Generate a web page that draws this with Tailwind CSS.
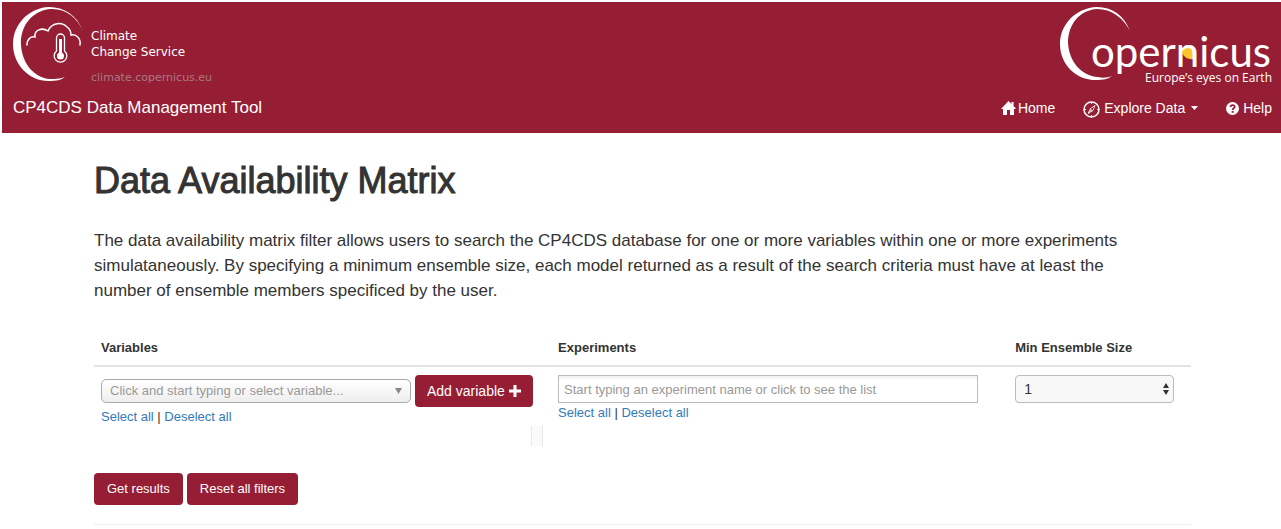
<!DOCTYPE html>
<html lang="en">
<head>
<meta charset="utf-8">
<meta name="viewport" content="width=device-width, initial-scale=1">
<title>Data Availability Matrix</title>
<script src="https://cdn.jsdelivr.net/npm/@tailwindcss/browser@4"></script>
</head>
<body class="bg-white font-['Liberation_Sans',Arial,sans-serif] text-[13px] leading-[18px] text-[#333]">
<header class="ml-0.5 mt-0.5 flex flex-col bg-[#961e34] pb-[13px] pl-[11px] pr-[9px] text-white">
  <div class="flex items-start justify-between">
    <a href="#" aria-label="Climate Change Service" class="flex items-start">
      <svg class="mt-1 h-[78px] w-[78px] shrink-0" viewBox="13 6 78 78" fill="none" aria-hidden="true">
        <path d="M83 31C77 15 64 7 49 7C28 8 13 25 13 44C13 66 31 82 50 81C56 81 61 80 65 77C59 79 55 79 50 79C34 78 22 63 21 45C20 26 32 11 50 9C65 8 77 17 83 31Z" fill="#fff"/>
        <path d="M27 45C27 39 31 36 35 37C34 30 42 27 48 31C52 22 62 22 67 27C70 29 71 32 71 35C77 34 81 39 80 45" stroke="#fff" stroke-width="1.500" stroke-linecap="round"/>
        <path d="M56.500 51V38a4 4 0 0 1 8 0V51a6.300 6.300 0 1 1-8 0Z" stroke="#fff" stroke-width="1.300"/>
        <path d="M60.500 39V56" stroke="#fff" stroke-width="3"/><circle cx="60.500" cy="56" r="3.500" fill="#fff"/>
      </svg>
      <span class="mt-[26px] flex flex-col font-['DejaVu_Sans',sans-serif] text-[12px] leading-4">
        <span>Climate</span><span>Change Service</span>
        <span class="mt-2.5 text-[11px] text-[#a87a82]">climate.copernicus.eu</span>
      </span>
    </a>
    <a href="#" aria-label="Copernicus" class="mt-1">
      <svg class="h-[80px] w-[214px] overflow-visible" viewBox="1058 6 214 80">
        <path d="M1130 31C1124 15 1112 7 1097 7C1075 8 1060 25 1060 44C1060 66 1078 81 1097 80C1103 80 1108 79 1112 76C1107 78 1102 78 1098 77C1081 76 1069 61 1068 43C1068 24 1080 10 1097 9C1112 9 1123 18 1130 31Z" fill="#fff"/>
        <path d="M1182 50C1184 44 1192 44 1194 49V59C1187 60 1182 56 1182 50Z" fill="#ffc72c"/>
        <text x="1091" y="67" font-family="Lato, sans-serif" font-size="42" fill="#fff">opernicus</text>
        <text x="1272" y="82" text-anchor="end" font-family="Open Sans, sans-serif" font-size="12" fill="#fff">Europe’s eyes on Earth</text>
      </svg>
    </a>
  </div>
  <nav class="mt-2.5 flex items-center justify-between">
    <a href="#" class="text-[17px] leading-6 [-webkit-text-stroke:0px]">CP4CDS Data Management Tool</a>
    <div class="flex items-center text-[14px]">
      <a href="#" class="flex items-center gap-0.5">
        <svg class="h-[14px] w-[15px]" viewBox="0 0 15 14" fill="#fff"><path d="M7.500 0L10.500 3V1h2v4l2.500 2.500L14 8h-1v6H9V9H6v5H2V8H0Z"/></svg>Home</a>
      <button type="button" class="ml-7 flex items-center gap-1">
        <svg class="mt-0.5 h-[17px] w-[17px]" viewBox="0 0 17 17" fill="none" stroke="#fff"><circle cx="8.500" cy="8.500" r="7.500" stroke-width="1.500"/><path d="M8.500 1v2M8.500 14v2M1 8.500h2M14 8.500h2"/><path d="M12 4.500L10 9.500L5 12.500L7.500 7.500Z" stroke-width=".8"/><path d="M7.500 7.500L10 9.500L5 12.500Z" fill="#fff" stroke="none" opacity=".6"/></svg>Explore Data
        <svg class="ml-0.5 h-1 w-[7px]" viewBox="0 0 7 4"><path d="M0 0h7L3.500 4Z" fill="#fff"/></svg></button>
      <a href="#" class="ml-7 flex items-center gap-1">
        <svg class="h-[13px] w-[13px]" viewBox="0 0 13 13"><circle cx="6.500" cy="6.500" r="6.500" fill="#fff"/><path d="M4.500 5C4.500 2.500 8.700 2.500 8.700 4.800C8.700 6.300 6.600 6.200 6.600 8" fill="none" stroke="#961e34" stroke-width="1.800"/><path d="M5.700 9h1.900v1.800H5.700Z" fill="#961e34"/></svg>Help</a>
    </div>
  </nav>
</header>
<main class="pl-[94px] pr-[90px]">
  <h1 class="mt-7 text-[36px] leading-10 [-webkit-text-stroke:1px_#333]">Data Availability Matrix</h1>
  <p class="mt-[27px] max-w-[1060px] text-[17px] leading-[25px]">The data availability matrix filter allows users to search the CP4CDS database for one or more variables within one or more experiments simulataneously. By specifying a minimum ensemble size, each model returned as a result of the search criteria must have at least the number of ensemble members specificed by the user.</p>
  <form>
    <table class="mt-7 w-full table-fixed text-left">
      <thead>
        <tr class="border-b-2 border-[#e3e3e3]">
          <th class="w-5/12 px-[7px] pb-2 pt-2">Variables</th>
          <th class="w-5/12 px-[7px] pb-2 pt-2">Experiments</th>
          <th class="w-2/12 px-[7px] pb-2 pt-2">Min Ensemble Size</th>
        </tr>
      </thead>
      <tbody>
        <tr class="align-top">
          <td class="pl-[7px] pt-2">
            <div class="flex items-center gap-1">
              <div class="relative w-[310px]">
                <select aria-label="Variable" class="block h-6 w-full appearance-none rounded-[5px] border border-[#aaa] bg-linear-to-b from-white to-[#eee] pl-2 text-[13px] leading-4 text-[#999]"><option>Click and start typing or select variable...</option></select>
                <svg class="pointer-events-none absolute right-[9px] top-[9px] h-1.5 w-[7px]" viewBox="0 0 7 6"><path d="M0 0h7L3.500 6Z" fill="#888"/></svg>
              </div>
              <button type="button" class="flex h-8 items-center gap-1 rounded-sm bg-[#961e34] px-3 text-[14px] text-white">Add variable
                <svg class="h-3 w-3" viewBox="0 0 12 12"><path d="M4.500 0h3v4.500H12v3H7.500V12h-3V7.500H0v-3h4.500Z" fill="#fff"/></svg></button>
            </div>
            <div class="mt-px"><a href="#" class="text-[#337ab7]">Select all</a> | <a href="#" class="text-[#337ab7]">Deselect all</a></div>
            <div class="ml-[430px] h-5 w-3 border-x border-[#e8e8e8] bg-[#fafafa]"></div>
          </td>
          <td class="px-[7px] pt-2">
            <input type="text" aria-label="Experiment" placeholder="Start typing an experiment name or click to see the list" class="block h-7 w-[420px] border border-[#bbb] bg-linear-to-b from-[#eee] to-white to-15% px-[5px] text-[13px] placeholder:text-[#999]">
            <div class="mt-px"><a href="#" class="text-[#337ab7]">Select all</a> | <a href="#" class="text-[#337ab7]">Deselect all</a></div>
          </td>
          <td class="px-[7px] pt-2">
            <div class="relative w-[159px]">
              <select aria-label="Min Ensemble Size" class="block h-7 w-full appearance-none rounded-sm border border-[#bbb] bg-[#f8f8f8] px-2 text-[14px]"><option>1</option></select>
              <svg class="pointer-events-none absolute right-[5px] top-2 h-3 w-1.5" viewBox="0 0 6 12"><path d="M0 5L3 0L6 5ZM0 7h6L3 12Z" fill="#333"/></svg>
            </div>
          </td>
        </tr>
      </tbody>
    </table>
    <div class="mt-[27px] flex gap-1 text-white">
      <button type="submit" class="h-8 rounded-sm bg-[#961e34] px-[13px]">Get results</button>
      <button type="reset" class="h-8 rounded-sm bg-[#961e34] px-[13px]">Reset all filters</button>
    </div>
  </form>
  <hr class="mt-[19px] border-[#eee]">
</main>
</body>
</html>
